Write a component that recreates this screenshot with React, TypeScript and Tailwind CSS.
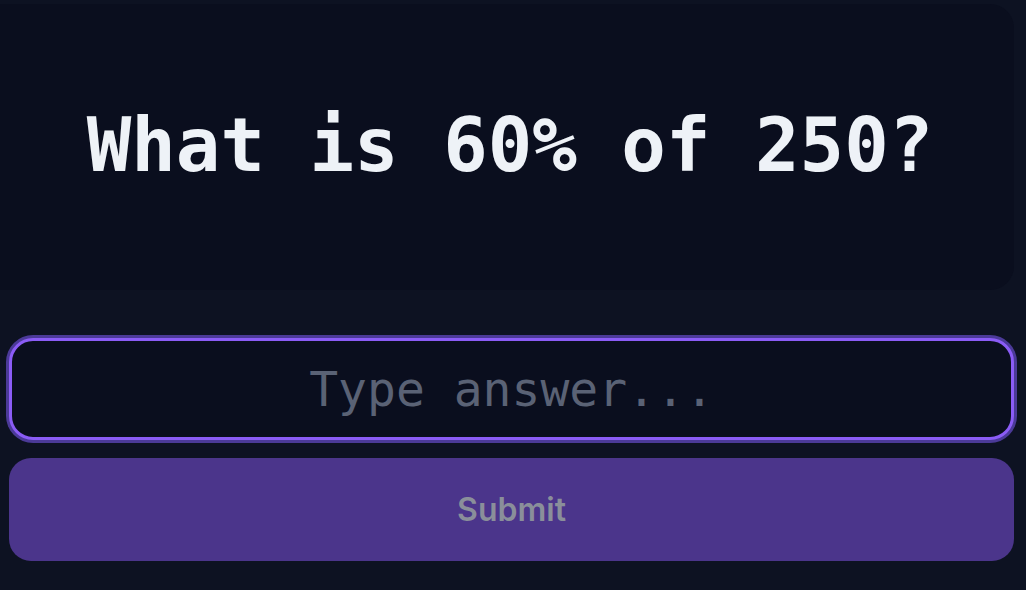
export default function App() {
  return (
    <div className="flex h-[590px] w-[1026px] flex-col overflow-hidden bg-[#0d1222]">
      <div className="-ml-8 mt-1 flex h-[286px] w-[1046px] items-center justify-center rounded-3xl bg-[#0a0e1e] pl-[38px]">
        <h1 className="mt-[-4px] text-[74px] font-bold leading-none text-[#eef2f7] [font-family:'DejaVu_Sans_Mono',monospace]">
          What is 60% of 250?
        </h1>
      </div>

      <div className="mt-[48px] flex flex-col gap-[18px] px-[9px] pr-[12px]">
        <div className="flex h-[102px] items-center justify-center rounded-[24px] border-[3px] border-[#8b5cf6] bg-[#0a0e1e] ring-[3px] ring-[#4b3a98]">
          <input
            type="text"
            placeholder="Type answer..."
            className="w-full bg-transparent text-center text-[48px] text-[#e5e7eb] outline-none placeholder:text-[#5a6275] [font-family:'DejaVu_Sans_Mono',monospace]"
          />
        </div>
        <button
          type="button"
          className="flex h-[103px] items-center justify-center rounded-[22px] bg-[#4b358b] text-[32px] font-semibold text-[#8a8f9a] [font-family:Inter,sans-serif]"
        >
          Submit
        </button>
      </div>
    </div>
  )
}
